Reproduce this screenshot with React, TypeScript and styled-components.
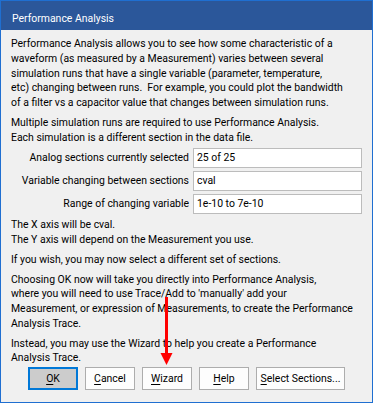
import React from "react";
import styled, { createGlobalStyle } from "styled-components";

const GlobalStyle = createGlobalStyle`
  html, body { margin: 0; padding: 0; background: #ffffff; }
  body { font-family: Roboto, "Liberation Sans", Arial, sans-serif; font-size: 10.45px; color: #000; }
`;

const Window = styled.div`
  position: relative;
  box-sizing: border-box;
  width: 373px;
  height: 403px;
  border: 1px solid #1f6fd1;
  background: #f0f0f0;
  display: flex;
  flex-direction: column;
`;

const TitleBar = styled.div`
  box-sizing: border-box;
  height: 29px;
  flex: none;
  background: #2b579a;
  color: #ffffff;
  padding: 11px 0 0 11px;
  line-height: 14px;
  white-space: nowrap;
`;

const Body = styled.div`
  flex: 1;
  display: flex;
  flex-direction: column;
  padding: 7px 10px 12px 10px;
  min-height: 0;
`;

const Para = styled.p<{ $gap?: number }>`
  margin: 0 0 ${(p) => (p.$gap ?? 5)}px 0;
  line-height: 14.75px;
  white-space: pre;
`;

const Fields = styled.div`
  display: grid;
  grid-template-columns: 1fr 169px;
  column-gap: 4px;
  row-gap: 3px;
  margin: 2.5px 0 4.5px 0;
`;

const FieldLabel = styled.div`
  text-align: right;
  line-height: 20px;
  white-space: nowrap;
`;

const FieldValue = styled.div`
  box-sizing: border-box;
  height: 20px;
  background: #ffffff;
  border: 1px solid #bcbcbc;
  padding: 0 3px;
  line-height: 18px;
  white-space: nowrap;
`;

const ButtonRow = styled.div`
  margin-top: auto;
  display: flex;
  justify-content: center;
  gap: 7px;
`;

const Button = styled.div<{ $default?: boolean; $w?: number }>`
  box-sizing: border-box;
  width: ${(p) => p.$w ?? 50}px;
  height: 23px;
  display: flex;
  align-items: center;
  justify-content: center;
  white-space: nowrap;
  background: ${(p) => (p.$default ? "#cccccc" : "#fdfdfd")};
  border: 1px solid ${(p) => (p.$default ? "#0078d7" : "#adadad")};
  box-shadow: ${(p) => (p.$default ? "inset 0 0 0 1px #0078d7" : "none")};
`;

const Key = styled.span`
  text-decoration: underline;
  text-underline-offset: 1.5px;
`;

const ArrowSvg = styled.svg`
  position: absolute;
  left: 0;
  top: 0;
  pointer-events: none;
`;

const fields: [string, string][] = [
  ["Analog sections currently selected", "25 of 25"],
  ["Variable changing between sections", "cval"],
  ["Range of changing variable", "1e-10 to 7e-10"],
];

export default function App() {
  return (
    <Window>
      <GlobalStyle />
      <TitleBar>Performance Analysis</TitleBar>
      <Body>
        <Para>
          {"Performance Analysis allows you to see how some characteristic of a\n" +
            "waveform (as measured by a Measurement) varies between several\n" +
            "simulation runs that have a single variable (parameter, temperature,\n" +
            "etc) changing between runs.  For example, you could plot the bandwidth\n" +
            "of a filter vs a capacitor value that changes between simulation runs."}
        </Para>
        <Para $gap={0}>
          {"Multiple simulation runs are required to use Performance Analysis.\n" +
            "Each simulation is a different section in the data file."}
        </Para>
        <Fields>
          {fields.map(([label, value]) => (
            <React.Fragment key={label}>
              <FieldLabel>{label}</FieldLabel>
              <FieldValue>{value}</FieldValue>
            </React.Fragment>
          ))}
        </Fields>
        <Para>{"The X axis will be cval.\nThe Y axis will depend on the Measurement you use."}</Para>
        <Para>{"If you wish, you may now select a different set of sections."}</Para>
        <Para>
          {"Choosing OK now will take you directly into Performance Analysis,\n" +
            "where you will need to use Trace/Add to 'manually' add your\n" +
            "Measurement, or expression of Measurements, to create the Performance\n" +
            "Analysis Trace."}
        </Para>
        <Para $gap={0}>
          {"Instead, you may use the Wizard to help you create a Performance\nAnalysis Trace."}
        </Para>
        <ButtonRow>
          <Button $default>
            <span>
              <Key>O</Key>K
            </span>
          </Button>
          <Button>
            <span>
              <Key>C</Key>ancel
            </span>
          </Button>
          <Button>
            <span>
              <Key>W</Key>izard
            </span>
          </Button>
          <Button>
            <span>
              <Key>H</Key>elp
            </span>
          </Button>
          <Button $w={89}>
            <span>
              <Key>S</Key>elect Sections...
            </span>
          </Button>
        </ButtonRow>
      </Body>
      <ArrowSvg width="373" height="403" viewBox="0 0 373 403">
        <rect x="164" y="296" width="3" height="58" fill="#ff0000" />
        <polygon points="159.5,352 171.5,352 165.5,364" fill="#ff0000" />
      </ArrowSvg>
    </Window>
  );
}
